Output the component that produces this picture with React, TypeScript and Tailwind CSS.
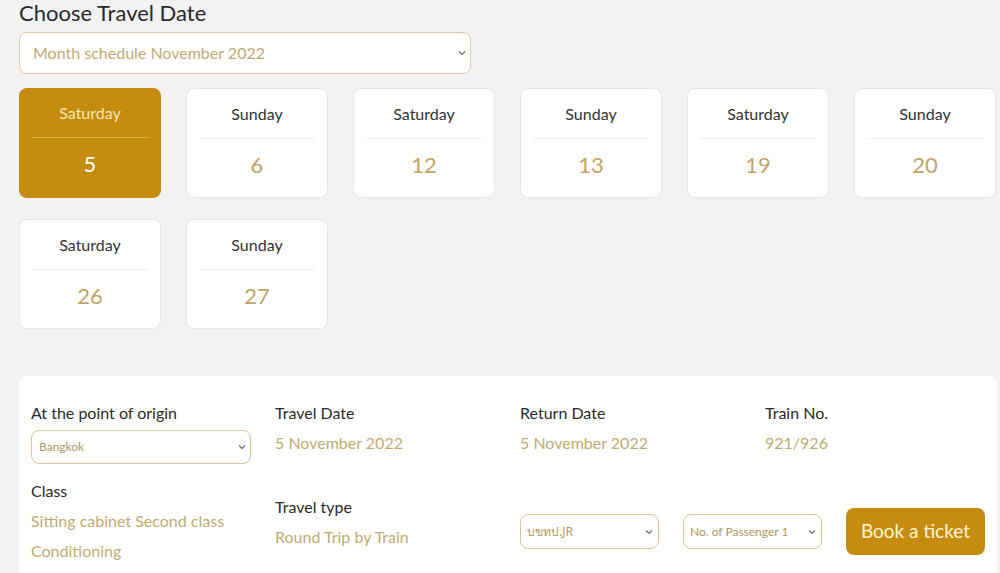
import React from "react";

const days = [
  ["Saturday", "5"],
  ["Sunday", "6"],
  ["Saturday", "12"],
  ["Sunday", "13"],
  ["Saturday", "19"],
  ["Sunday", "20"],
  ["Saturday", "26"],
  ["Sunday", "27"],
];

function Chevron() {
  return (
    <svg width="8" height="6" viewBox="0 0 8 6" className="shrink-0">
      <path d="M1 1.5 L4 4.5 L7 1.5" fill="none" stroke="#666" strokeWidth="1.1" />
    </svg>
  );
}

export default function App() {
  return (
    <div
      className="w-[1000px] h-[573px] overflow-hidden bg-[#f2f2f2] pl-[19px] pr-[3px]"
      style={{ fontFamily: "Lato, 'Noto Sans', sans-serif" }}
    >
      <div className="text-[22px] leading-[26px] text-[#2a2a2a]">Choose Travel Date</div>
      <div className="mt-[6px] w-[452px] h-[42px] bg-white border border-[#dccb9c] rounded-lg flex items-center justify-between pl-[13px] pr-[4px]">
        <span className="text-[16px] text-[#bfab74]">Month schedule November 2022</span>
        <Chevron />
      </div>
      <div className="mt-[14px] grid grid-cols-[repeat(6,142px)] gap-x-[25px] gap-y-[21px]">
        {days.map(([d, n], i) => {
          const sel = i === 0;
          return (
            <div
              key={i}
              className={
                sel
                  ? "h-[110px] rounded-lg bg-[#c68c10] px-[12px] flex flex-col"
                  : "h-[110px] rounded-lg bg-white border border-[#e6e6e6] px-[12px] flex flex-col"
              }
            >
              <div
                className={
                  sel
                    ? "h-[50px] flex items-center justify-center text-[16px] text-[#f7e6b0] border-b border-[#dcae4c]"
                    : "h-[50px] flex items-center justify-center text-[16px] text-[#333] border-b border-[#eeeeee]"
                }
              >
                {d}
              </div>
              <div
                className={
                  sel
                    ? "h-[50px] flex items-center justify-center text-[22px] text-white"
                    : "h-[50px] flex items-center justify-center text-[22px] text-[#bea566]"
                }
              >
                {n}
              </div>
            </div>
          );
        })}
      </div>
      <div className="mt-[47px] bg-white rounded-lg h-[220px] pl-[12px] pt-[26px]">
        <div className="grid grid-cols-[244px_245px_245px_200px]">
          <div>
            <div className="text-[16px] text-[#2a2a2a] leading-[22px]">At the point of origin</div>
            <div className="mt-[6px] w-[220px] h-[34px] border border-[#d8c79a] rounded-lg flex items-center justify-between pl-[7px] pr-[4px]">
              <span className="text-[12px] text-[#ad9761]">Bangkok</span>
              <Chevron />
            </div>
          </div>
          <div>
            <div className="text-[16px] text-[#2a2a2a] leading-[22px]">Travel Date</div>
            <div className="text-[16px] text-[#bfab74] leading-[22px] mt-[8px]">5 November 2022</div>
          </div>
          <div>
            <div className="text-[16px] text-[#2a2a2a] leading-[22px]">Return Date</div>
            <div className="text-[16px] text-[#bfab74] leading-[22px] mt-[8px]">5 November 2022</div>
          </div>
          <div>
            <div className="text-[16px] text-[#2a2a2a] leading-[22px]">Train No.</div>
            <div className="text-[16px] text-[#bfab74] leading-[22px] mt-[8px]">921/926</div>
          </div>
        </div>
        <div className="grid grid-cols-[244px_245px_163px_163px_140px] mt-[16px]">
          <div>
            <div className="text-[16px] text-[#2a2a2a] leading-[22px]">Class</div>
            <div className="text-[16px] text-[#bfab74] leading-[22px] mt-[8px]">Sitting cabinet Second class</div>
            <div className="text-[16px] text-[#bfab74] leading-[22px] mt-[8px]">Conditioning</div>
          </div>
          <div className="pt-[16px]">
            <div className="text-[16px] text-[#2a2a2a] leading-[22px]">Travel type</div>
            <div className="text-[16px] text-[#bfab74] leading-[22px] mt-[8px]">Round Trip by Train</div>
          </div>
          <div className="pt-[34px]">
            <div className="w-[139px] h-[35px] border border-[#d8c79a] rounded-lg flex items-center justify-between pl-[6px] pr-[5px]">
              <span className="text-[12px] text-[#ad9761]" style={{ fontFamily: "'Noto Sans', 'DejaVu Sans', sans-serif" }}>บขทป.JR</span>
              <Chevron />
            </div>
          </div>
          <div className="pt-[34px]">
            <div className="w-[139px] h-[35px] border border-[#d8c79a] rounded-lg flex items-center justify-between pl-[6px] pr-[5px]">
              <span className="text-[12px] text-[#ad9761]">No. of Passenger 1</span>
              <Chevron />
            </div>
          </div>
          <div className="pt-[28px]">
            <div className="w-[139px] h-[47px] bg-[#c68c10] rounded-lg flex items-center justify-center text-[19px] text-[#fff4d6]">
              Book a ticket
            </div>
          </div>
        </div>
      </div>
    </div>
  );
}
